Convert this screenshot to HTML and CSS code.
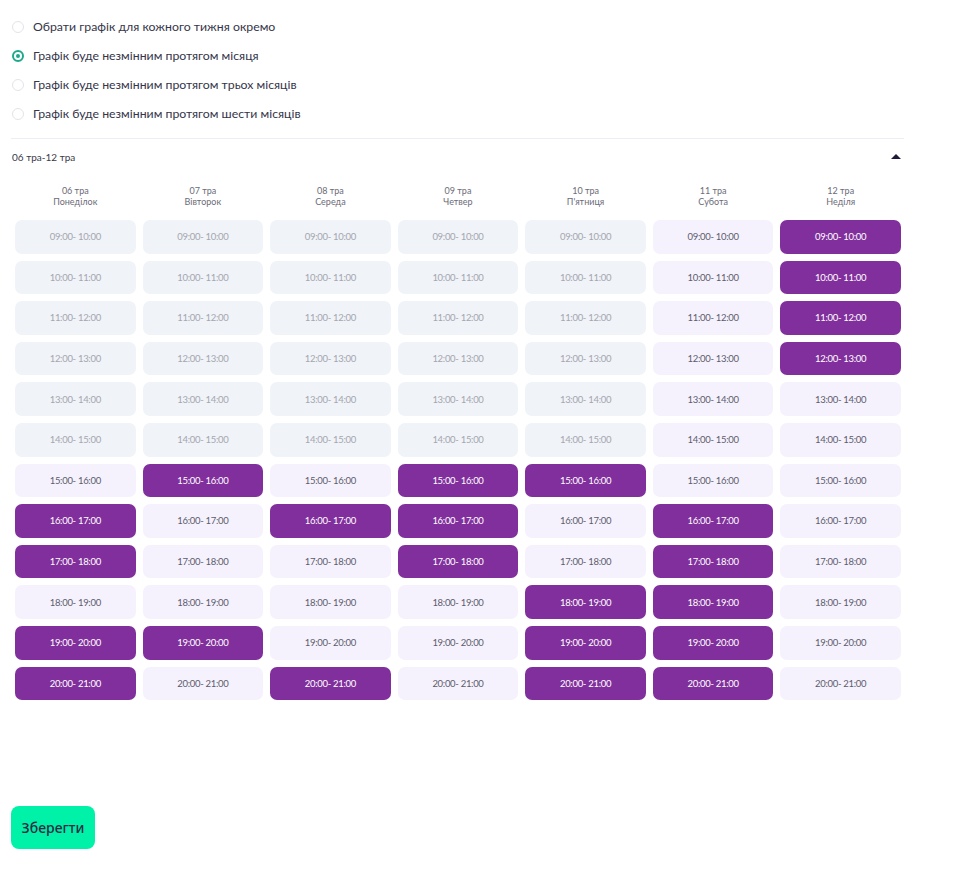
FILE: index.html
```html
<!DOCTYPE html>
<html lang="uk">
<head>
    <meta charset="UTF-8">
    <meta name="viewport" content="width=device-width, initial-scale=1.0">
    <title>Графік</title>
    <link rel="stylesheet" href="styles.css">
</head>
<body>
    <div class="page">
        <div class="options">
            <label class="option"><span class="radio"></span>Обрати графік для кожного тижня окремо</label>
            <label class="option"><span class="radio checked"></span>Графік буде незмінним протягом місяця</label>
            <label class="option"><span class="radio"></span>Графік буде незмінним протягом трьох місяців</label>
            <label class="option"><span class="radio"></span>Графік буде незмінним протягом шести місяців</label>
        </div>

        <div class="week">
            <div class="week-head">
                <span>06 тра-12 тра</span>
                <span class="arrow"></span>
            </div>
            <div class="grid" id="grid"></div>
        </div>

        <button class="save">Зберегти</button>
    </div>

    <script src="script.js"></script>
</body>
</html>
```

FILE: script.js
```js
const days = [
    ["06 тра", "Понеділок"],
    ["07 тра", "Вівторок"],
    ["08 тра", "Середа"],
    ["09 тра", "Четвер"],
    ["10 тра", "П'ятниця"],
    ["11 тра", "Субота"],
    ["12 тра", "Неділя"]
];

// d = disabled, a = available, s = selected (one string per hour, Mon..Sun)
const slots = [
    "dddddas",
    "dddddas",
    "dddddas",
    "dddddas",
    "dddddaa",
    "dddddaa",
    "asassaa",
    "sassasa",
    "saasasa",
    "aaaassa",
    "ssaassa",
    "sasassa"
];

const grid = document.getElementById("grid");

days.forEach(day => {
    const h = document.createElement("div");
    h.className = "day";
    h.innerHTML = `${day[0]}<br>${day[1]}`;
    grid.appendChild(h);
});

slots.forEach((row, i) => {
    const from = String(9 + i).padStart(2, "0");
    const to = String(10 + i).padStart(2, "0");
    row.split("").forEach(state => {
        const cell = document.createElement("div");
        cell.className = "slot " + { d: "disabled", a: "available", s: "selected" }[state];
        cell.textContent = `${from}:00- ${to}:00`;
        grid.appendChild(cell);
    });
});
```

FILE: styles.css
```css
body {
    font-family: 'Lato', 'Noto Sans', sans-serif;
    background-color: #ffffff;
    margin: 0;
    padding: 0;
    color: #333;
}

.page {
    width: 893px;
    padding: 12px 0 0 11px;
}

.options {
    display: flex;
    flex-direction: column;
    padding-bottom: 10px;
    border-bottom: 1px solid #eceef3;
}

.option {
    display: flex;
    align-items: center;
    gap: 9px;
    height: 29px;
    font-size: 12.3px;
    color: #35354a;
}

.radio {
    width: 12px;
    height: 12px;
    margin-left: 1px;
    border: 1px solid #e2e4ea;
    border-radius: 50%;
    box-sizing: border-box;
    position: relative;
}

.radio.checked {
    border: 2px solid #1ba98a;
}

.radio.checked::after {
    content: "";
    position: absolute;
    left: 2px;
    top: 2px;
    width: 4px;
    height: 4px;
    border-radius: 50%;
    background-color: #1ba98a;
}

.week-head {
    display: flex;
    justify-content: space-between;
    align-items: center;
    font-size: 10px;
    color: #3a3a4a;
    padding: 11px 3px 0 1px;
    height: 13px;
}

.arrow {
    width: 0;
    height: 0;
    border-left: 5px solid transparent;
    border-right: 5px solid transparent;
    border-bottom: 5px solid #1e1a3c;
}

.grid {
    display: grid;
    grid-template-columns: repeat(7, 1fr);
    column-gap: 7px;
    row-gap: 7px;
    padding: 22px 3px 0 4px;
}

.day {
    text-align: center;
    font-size: 9px;
    line-height: 11px;
    color: #6b6b78;
    margin-bottom: 6px;
}

.slot {
    height: 33.6px;
    border-radius: 7px;
    display: flex;
    align-items: center;
    justify-content: center;
    font-size: 9.5px;
    letter-spacing: -0.3px;
}

.slot.disabled {
    background-color: #f0f3f7;
    color: #a4a6b0;
}

.slot.available {
    background-color: #f5f2fd;
    color: #5c5c6c;
}

.slot.selected {
    background-color: #812f9c;
    color: #ffffff;
}

.save {
    margin-top: 106px;
    width: 84px;
    height: 43px;
    border: none;
    border-radius: 8px;
    background-color: #00f2a9;
    color: #2a2a44;
    font-family: 'Noto Sans', sans-serif;
    font-size: 14px;
    font-weight: 500;
    cursor: pointer;
}
```
